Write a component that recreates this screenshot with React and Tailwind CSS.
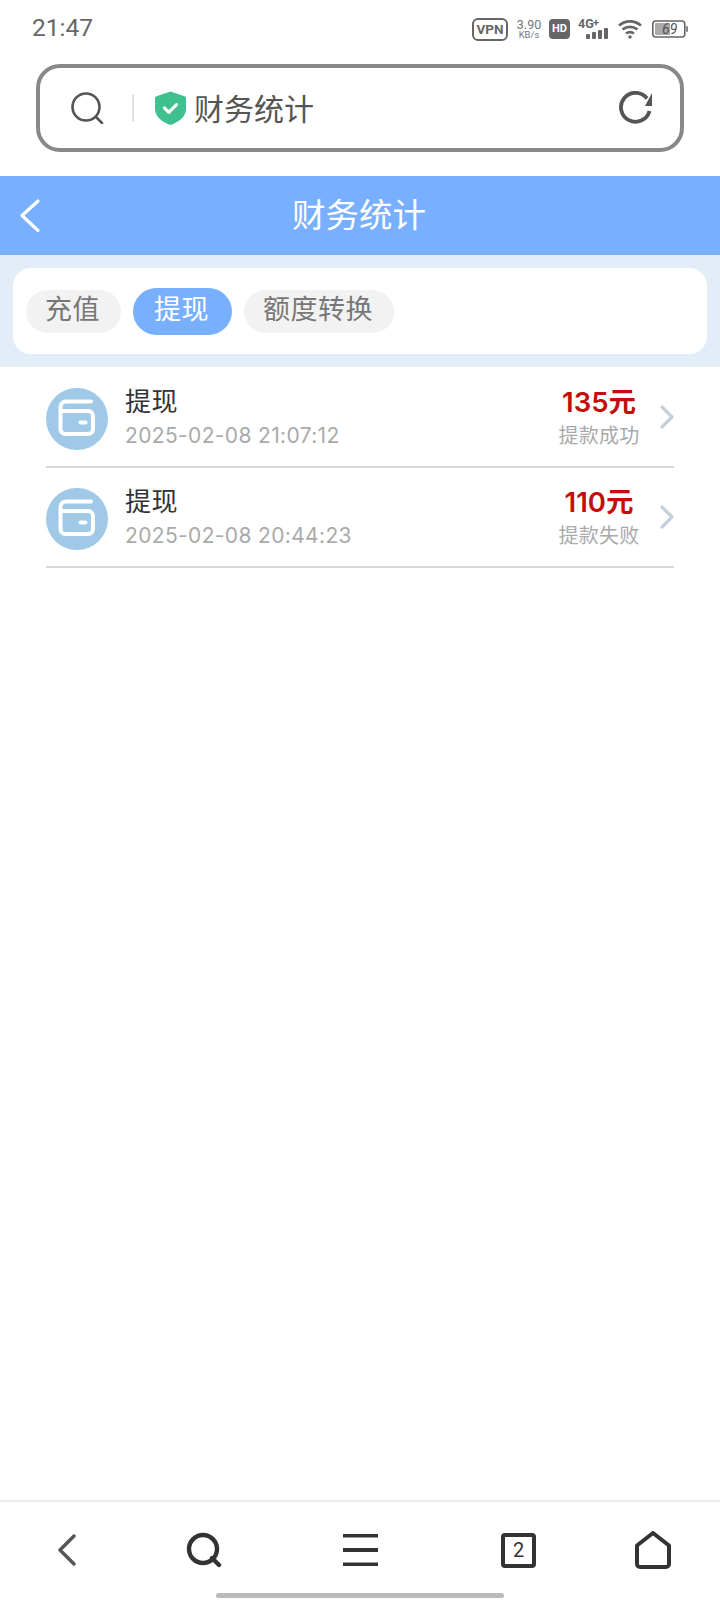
const CJK = '"Noto Sans CJK SC", sans-serif';

function Wallet() {
  return (
    <div className="w-[62px] h-[62px] rounded-full bg-[#9fc9e6] shrink-0">
      <svg width="62" height="62" viewBox="0 0 62 62" fill="none">
        <path d="M45 13.500H20a5.500 5.500 0 0 0-5.500 5.500V41a5 5 0 0 0 5 5H42a5 5 0 0 0 5-5V28a5 5 0 0 0-5-5H15" stroke="#fff" strokeWidth="4" strokeLinecap="round" />
        <rect x="32.500" y="32.500" width="9" height="4" rx="2" fill="#fff" />
      </svg>
    </div>
  );
}

function Row({ date, amount, status }) {
  return (
    <div className="flex h-[100px] mx-[46px] pt-[20px] border-b-2 border-[#d9d9d9] items-start">
      <Wallet />
      <div className="ml-[17px] -mt-[3px] flex-1 flex flex-col">
        <div className="text-[26px] leading-[30px] text-[#333] tracking-[0.5px]" style={{ fontFamily: CJK }}>提现</div>
        <div className="mt-[8px] text-[21px] leading-[26px] text-[#aaa] tracking-[0.35px] font-['Inter']">{date}</div>
      </div>
      <div className="flex flex-col items-center w-[82px] -mt-[1px]">
        <div className="text-[27.500px] leading-[30px] font-semibold text-[#c40d0d] whitespace-nowrap" style={{ fontFamily: '"Inter", "Noto Sans CJK SC", sans-serif' }}>{amount}</div>
        <div className="mt-[5px] text-[20px] leading-[26px] tracking-[0.2px] text-[#aaa] whitespace-nowrap" style={{ fontFamily: CJK }}>{status}</div>
      </div>
      <svg className="ml-[20px] mt-[17px]" width="14" height="24" viewBox="0 0 14 24" fill="none">
        <path d="M2 2l10 10L2 22" stroke="#c5d0dc" strokeWidth="3.200" strokeLinecap="round" strokeLinejoin="round" />
      </svg>
    </div>
  );
}

function Chip({ children, active }) {
  return (
    <div
      className={
        active
          ? "h-[47px] rounded-full pl-[21px] pr-[23px] pb-[6px] flex items-center bg-[#78b0ff] text-white text-[27px] tracking-[0.5px]"
          : "h-[43px] rounded-full pl-[19px] pr-[21px] pb-[6px] flex items-center bg-[#f2f2f2] text-[#777] text-[27px] tracking-[0.5px]"
      }
      style={{ fontFamily: CJK }}
    >
      {children}
    </div>
  );
}

export default function App() {
  return (
    <div className="w-[720px] h-[1600px] bg-white flex flex-col overflow-hidden">
      {/* status bar */}
      <div className="h-[64px] flex items-start pl-[32px] pt-[12px] shrink-0">
        <div className="text-[24.500px] leading-[32px] text-[#666] font-['Roboto']">21:47</div>
        <div className="flex items-center h-[32px] ml-[379px] mt-[1px]">
          <div className="w-[36px] h-[23px] border-2 border-[#666] rounded-[6px] flex items-center justify-center text-[13.500px] font-bold text-[#666] font-['Roboto']">VPN</div>
          <div className="ml-[8px] w-[26px] flex flex-col items-center text-[#777] font-['Roboto']">
            <div className="text-[12.500px] leading-[11px]">3.90</div>
            <div className="text-[9.500px] leading-[10px]">KB/s</div>
          </div>
          <div className="ml-[7px] w-[21px] h-[20px] bg-[#666] rounded-[4px] flex items-center justify-center text-[11px] font-bold text-white font-['Roboto']">HD</div>
          <svg className="ml-[8px]" width="32" height="24" viewBox="0 0 32 24" fill="#666">
            <text x="0" y="11" fontSize="12.500" fontWeight="700" fontFamily="Roboto">4G</text>
            <text x="15" y="9" fontSize="11" fontWeight="700" fontFamily="Roboto">+</text>
            <rect x="8" y="17" width="4" height="5" rx="1" />
            <rect x="14" y="15" width="4" height="7" rx="1" />
            <rect x="20" y="13" width="4" height="9" rx="1" />
            <rect x="26" y="11" width="4" height="11" rx="1" />
          </svg>
          <svg className="ml-[8px]" width="24" height="20" viewBox="0 0 24 20" fill="none" stroke="#666" strokeWidth="2.600">
            <path d="M1 6.500C7.500 1 16.500 1 23 6.500" />
            <path d="M4.500 10.500C9 7 15 7 19.500 10.500" />
            <path d="M8 14.500c2.500-1.800 5.500-1.800 8 0" />
            <circle cx="12" cy="18" r="1.800" fill="#666" stroke="none" />
          </svg>
          <svg className="ml-[10px]" width="36" height="18" viewBox="0 0 36 18" fill="none">
            <rect x="0.800" y="1" width="32" height="16" rx="3" stroke="#666" strokeWidth="1.600" />
            <rect x="3" y="3" width="15" height="12" rx="1" fill="#aaa" />
            <rect x="34" y="6" width="2" height="6" rx="1" fill="#888" />
            <text x="10" y="14" fontSize="14" fontStyle="italic" fill="#555" fontFamily="Roboto">69</text>
          </svg>
        </div>
      </div>

      {/* search box */}
      <div className="mx-[36px] h-[88px] border-4 border-[#888] rounded-[24px] flex items-center shrink-0 bg-white">
        <svg className="ml-[31px]" width="33" height="32" viewBox="0 0 33 32" fill="none" stroke="#555" strokeWidth="2.600" strokeLinecap="round">
          <circle cx="15" cy="15" r="13.500" />
          <path d="M25 25l6 6" />
        </svg>
        <div className="ml-[28px] w-[2px] h-[28px] bg-[#e2e2e2]" />
        <svg className="ml-[21px]" width="31" height="34" viewBox="0 0 31 34">
          <path d="M15.500 0.500L29.500 5.300c.9.300 1.500 1.100 1.500 2V18c0 8-8 13.500-15.500 16C8 31.500 0 26 0 18V7.300c0-.9.600-1.700 1.500-2z" fill="#3fc08f" />
          <path d="M9.500 17l4.300 4.300 7.700-7.700" stroke="#fff" strokeWidth="3.200" fill="none" strokeLinecap="round" strokeLinejoin="round" />
        </svg>
        <div className="ml-[8px] -mt-[2px] text-[30px] leading-[36px] text-[#555]" style={{ fontFamily: CJK }}>财务统计</div>
        <svg className="ml-auto mr-[27px]" width="34" height="34" viewBox="0 0 34 34" fill="none" stroke="#555" strokeWidth="3.800">
          <path d="M28 7.500A14.500 14.500 0 1 0 30.500 20" />
          <path d="M33 2v13h-7z" fill="#555" stroke="none" />
        </svg>
      </div>

      <div className="h-[24px] shrink-0" />

      {/* header */}
      <div className="h-[79px] bg-[#78b0ff] flex items-center shrink-0">
        <svg className="ml-[19px]" width="22" height="36" viewBox="0 0 22 36" fill="none">
          <path d="M19 3L3 17.500l16 15" stroke="#fff" strokeWidth="3.200" strokeLinecap="round" strokeLinejoin="round" />
        </svg>
        <div className="ml-[251px] pb-[6px] text-[33.500px] leading-[40px] text-white" style={{ fontFamily: CJK }}>财务统计</div>
      </div>

      {/* tabs */}
      <div className="h-[112px] bg-[#e3edf8] pt-[13px] px-[13px] shrink-0">
        <div className="h-[86px] bg-white rounded-[18px] flex items-center pl-[13px] gap-[12px]">
          <Chip>充值</Chip>
          <Chip active>提现</Chip>
          <Chip>额度转换</Chip>
        </div>
      </div>

      {/* list */}
      <div className="pt-px">
        <Row date="2025-02-08 21:07:12" amount="135元" status="提款成功" />
        <Row date="2025-02-08 20:44:23" amount="110元" status="提款失败" />
      </div>

      <div className="flex-1" />

      {/* bottom nav */}
      <div className="h-[100px] border-t-2 border-[#eaeaea] shrink-0 flex flex-col">
        <div className="h-[91px] flex items-center pl-[57px] pt-[5px] shrink-0">
          <svg width="19" height="32" viewBox="0 0 19 32" fill="none">
            <path d="M17 2L3 16l14 14" stroke="#555" strokeWidth="3.400" strokeLinecap="round" strokeLinejoin="round" />
          </svg>
          <svg className="ml-[110px]" width="36" height="36" viewBox="0 0 36 36" fill="none" stroke="#333" strokeWidth="4.400">
            <circle cx="17" cy="17" r="14" />
            <path d="M26 26l7 7" strokeLinecap="round" />
          </svg>
          <svg className="ml-[121px]" width="35" height="32" viewBox="0 0 35 32" fill="#333">
            <rect x="0" y="0" width="35" height="3.500" />
            <rect x="0" y="14" width="35" height="4" />
            <rect x="0" y="28.500" width="35" height="3.500" />
          </svg>
          <div className="ml-[123px] w-[35px] h-[35px] border-4 border-[#333] rounded-[4px] flex items-center justify-center text-[20px] leading-none text-[#333] font-['Roboto']">2</div>
          <svg className="ml-[99px]" width="36" height="38" viewBox="0 0 36 38" fill="none">
            <path d="M2 14.500L18 2l16 12.500V33a3 3 0 0 1-3 3H5a3 3 0 0 1-3-3z" stroke="#333" strokeWidth="4" strokeLinejoin="round" />
          </svg>
        </div>
        <div className="w-[288px] h-[5px] rounded-full bg-[#bbb] mx-auto" />
      </div>
    </div>
  );
}
